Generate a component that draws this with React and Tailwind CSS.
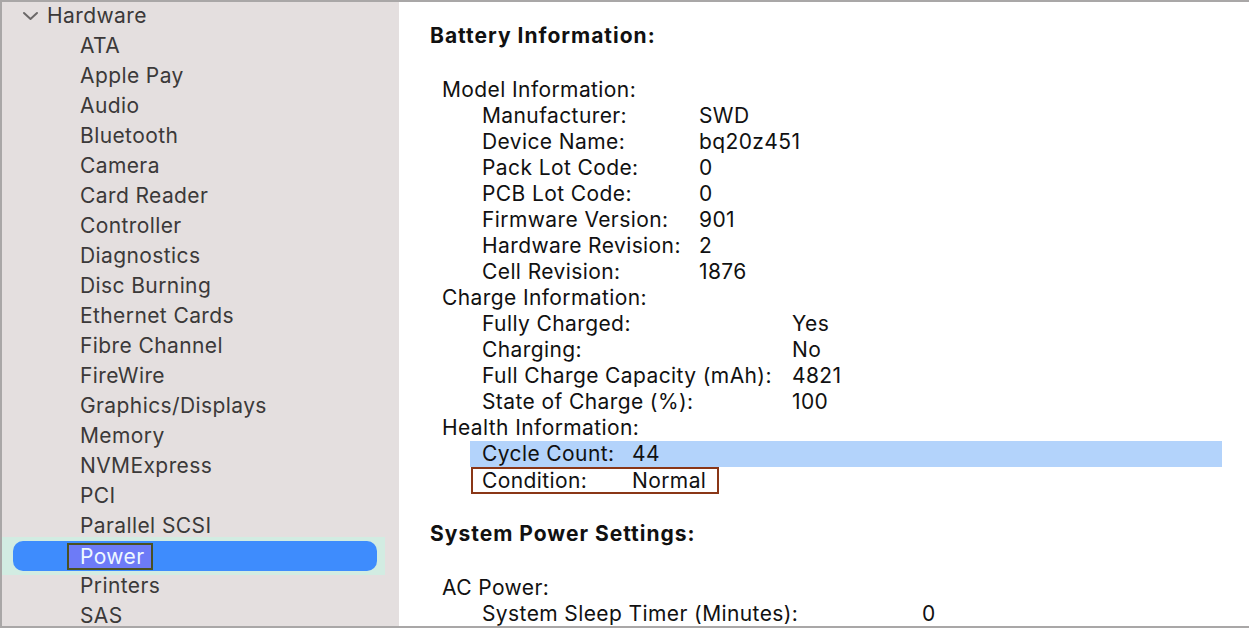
import React from 'react';

const hardware = [
  'ATA', 'Apple Pay', 'Audio', 'Bluetooth', 'Camera', 'Card Reader', 'Controller',
  'Diagnostics', 'Disc Burning', 'Ethernet Cards', 'Fibre Channel', 'FireWire',
  'Graphics/Displays', 'Memory', 'NVMExpress', 'PCI', 'Parallel SCSI', 'Power',
  'Printers', 'SAS',
];

const modelInfo = [
  ['Manufacturer:', 'SWD'],
  ['Device Name:', 'bq20z451'],
  ['Pack Lot Code:', '0'],
  ['PCB Lot Code:', '0'],
  ['Firmware Version:', '901'],
  ['Hardware Revision:', '2'],
  ['Cell Revision:', '1876'],
];

const chargeInfo = [
  ['Fully Charged:', 'Yes'],
  ['Charging:', 'No'],
  ['Full Charge Capacity (mAh):', '4821'],
  ['State of Charge (%):', '100'],
];

const Chevron = () => (
  <svg width="17" height="10" viewBox="0 0 17 10" className="mr-[8px]">
    <path d="M2 2 L8.5 8 L15 2" fill="none" stroke="#6b6868" strokeWidth="2" strokeLinecap="round" strokeLinejoin="round" />
  </svg>
);

const Sidebar = () => (
  <div className="w-[399px] shrink-0 bg-[#e4dfdf] text-[21px] tracking-[0.4px] text-[#3b3939] flex flex-col pt-[1px]">
    <div className="h-[30px] flex items-center pl-[22px]">
      <Chevron />
      <span>Hardware</span>
    </div>
    {hardware.map((item) =>
      item === 'Power' ? (
        <div key={item} className="h-[30px] flex items-center bg-[#d2ece2] -my-[4px] py-[4px] box-content w-[385px]">
          <div className="ml-[13px] w-[364px] h-[30px] rounded-[10px] bg-[#3e8cfd] flex items-center pl-[54px]">
            <span className="h-[27px] w-[86px] pl-[11px] border-2 border-[#4a5122] bg-[#6d7bf7] text-[#eef8ff] flex items-center leading-none">
              Power
            </span>
          </div>
        </div>
      ) : (
        <div key={item} className="h-[30px] flex items-center pl-[80px]">
          {item}
        </div>
      )
    )}
  </div>
);

const Row = ({ label, value, w, indent = true }) => (
  <div className={`h-[26px] flex items-center ${indent ? 'pl-[83px]' : 'pl-[43px]'}`}>
    <span style={{ width: w }} className="shrink-0">{label}</span>
    <span>{value}</span>
  </div>
);

const Heading = ({ children }) => (
  <div className="h-[26px] flex items-center pl-[43px]">{children}</div>
);

export default function App() {
  return (
    <div
      className="relative w-[1249px] h-[628px] overflow-hidden flex bg-white"
      style={{ fontFamily: 'Inter, "Open Sans", sans-serif' }}
    >
      <Sidebar />
      <div className="flex-1 text-[21px] tracking-[0.4px] text-[#111] pr-[27px]">
        <div className="h-[30px] mt-[21px] flex items-center pl-[31px] font-bold tracking-[1px]">Battery Information:</div>
        <div className="mt-[26px]">
          <Heading>Model Information:</Heading>
          {modelInfo.map(([l, v]) => (
            <Row key={l} label={l} value={v} w="217px" />
          ))}
          <Heading>Charge Information:</Heading>
          {chargeInfo.map(([l, v]) => (
            <Row key={l} label={l} value={v} w="310px" />
          ))}
          <Heading>Health Information:</Heading>
          <div className="ml-[71px] h-[26px] bg-[#b3d3fb] flex items-center pl-[12px]">
            <span className="w-[150px] shrink-0">Cycle Count:</span>
            <span>44</span>
          </div>
          <div className="ml-[72px] w-[248px] h-[27px] border-2 border-[#8a3617] flex items-center pl-[9px]">
            <span className="w-[150px] shrink-0">Condition:</span>
            <span>Normal</span>
          </div>
        </div>
        <div className="h-[30px] mt-[25px] flex items-center pl-[31px] font-bold tracking-[1px]">System Power Settings:</div>
        <div className="mt-[26px]">
          <Heading>AC Power:</Heading>
          <Row label="System Sleep Timer (Minutes):" value="0" w="440px" />
        </div>
      </div>
      <div className="pointer-events-none absolute inset-0 border-t-2 border-l-2 border-b-2 border-[#a9a7a7]" />
    </div>
  );
}
